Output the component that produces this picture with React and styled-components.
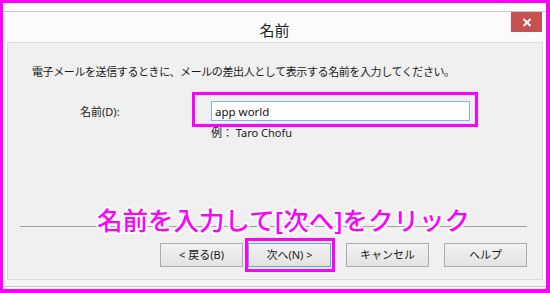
import React from 'react';
import styled, { createGlobalStyle } from 'styled-components';

const GlobalStyle = createGlobalStyle`
  html, body {
    margin: 0;
    padding: 0;
    background: #fff;
  }
  body {
    font-family: "Noto Sans", "Noto Sans CJK JP", sans-serif;
    color: #1a1a1a;
  }
`;

function App() {
  return (
    <>
      <GlobalStyle />
      <Frame>
        <TitleBar>
          <span />
          <Title>名前</Title>
          <CloseButton aria-label="閉じる">
            <svg width="10" height="9" viewBox="0 0 10 9">
              <path d="M1.5 1 L8.5 8 M8.5 1 L1.5 8" stroke="#fff" strokeWidth="2" />
            </svg>
          </CloseButton>
        </TitleBar>
        <Panel>
          <Description>
            電子メールを送信するときに、メールの差出人として表示する名前を入力してください。
          </Description>
          <FieldRow>
            <Label>名前(D):</Label>
            <Highlight $inset="-9px -8px -6px -19px">
              <Input defaultValue="app world" />
            </Highlight>
          </FieldRow>
          <Example>例：&nbsp;Taro Chofu</Example>
          <Separator>
            <Callout>名前を入力して[次へ]をクリック</Callout>
          </Separator>
          <Buttons>
            <Button>&lt; 戻る(B)</Button>
            <Highlight $inset="-5px -4px -5px -3px">
              <Button $default>次へ(N) &gt;</Button>
            </Highlight>
            <Button $gap>キャンセル</Button>
            <Button $gap>ヘルプ</Button>
          </Buttons>
        </Panel>
        <BottomEdge />
      </Frame>
    </>
  );
}

const Frame = styled.div`
  width: 550px;
  height: 293px;
  box-sizing: border-box;
  border: solid #ff00ff;
  border-width: 3px 4px 4px 3px;
  background: #fff;
  padding: 8px 0 2px;
  display: flex;
  flex-direction: column;
`;

const TitleBar = styled.div`
  height: 30px;
  border-top: 1px solid #c9c9c9;
  background: #fbfbfb;
  display: grid;
  grid-template-columns: 1fr auto 1fr;
`;

const Title = styled.div`
  font-size: 15px;
  line-height: 36px;
  color: #1e1e1e;
`;

const CloseButton = styled.div`
  justify-self: end;
  width: 31px;
  height: 20px;
  margin-right: 4px;
  background: #c75050;
  display: flex;
  align-items: center;
  justify-content: center;
`;

const Panel = styled.div`
  flex: 1;
  margin: 0 3px 0 4px;
  border: 1px solid #dadada;
  background: #f0f0f0;
  display: flex;
  flex-direction: column;
  padding: 21px 15px 0 12px;
`;

const Description = styled.div`
  font-size: 11px;
  line-height: 16px;
  letter-spacing: -0.4px;
  padding-left: 12px;
  white-space: nowrap;
`;

const FieldRow = styled.div`
  display: flex;
  align-items: center;
  margin-top: 21px;
  padding-left: 60px;
`;

const Label = styled.div`
  width: 131px;
  font-size: 11px;
  line-height: 16px;
  padding-top: 1px;
`;

const Highlight = styled.div`
  position: relative;
  display: flex;

  &::after {
    content: '';
    position: absolute;
    inset: ${({ $inset }) => $inset};
    border: 3px solid #ff00ff;
    pointer-events: none;
  }
`;

const Input = styled.input`
  width: 259px;
  height: 20px;
  box-sizing: border-box;
  border: 1px solid #7eb4ea;
  background: #fff;
  padding: 0 3px;
  font-family: inherit;
  font-size: 11.5px;
  color: #111;
  outline: none;
`;

const Example = styled.div`
  margin-top: 4px;
  padding-left: 191px;
  font-size: 11px;
  line-height: 16px;
`;

const Separator = styled.div`
  position: relative;
  height: 1px;
  margin-top: 85px;
  background: #a0a0a0;
`;

const Callout = styled.div`
  position: absolute;
  left: 77px;
  top: -22px;
  font-size: 25.5px;
  line-height: 32px;
  font-weight: 500;
  color: #ff00ff;
  white-space: nowrap;
  text-shadow:
    2px 0 0 #fff, -2px 0 0 #fff, 0 2px 0 #fff, 0 -2px 0 #fff,
    1.5px 1.5px 0 #fff, -1.5px 1.5px 0 #fff, 1.5px -1.5px 0 #fff, -1.5px -1.5px 0 #fff;
`;

const Buttons = styled.div`
  display: flex;
  justify-content: flex-end;
  gap: 5px;
  margin-top: 16px;
`;

const Button = styled.div`
  width: 83px;
  height: 24px;
  box-sizing: border-box;
  margin-left: ${({ $gap }) => ($gap ? '10px' : '0')};
  border: 1px solid ${({ $default }) => ($default ? '#5ea5e8' : '#acacac')};
  background: linear-gradient(#f2f2f2, #e3e3e3);
  font-size: 11px;
  line-height: 22px;
  text-align: center;
  color: #1a1a1a;
  white-space: nowrap;
`;

const BottomEdge = styled.div`
  height: 6px;
  background: #f5f5f5;
  border-bottom: 1px solid #c9c9c9;
`;

export default App;
